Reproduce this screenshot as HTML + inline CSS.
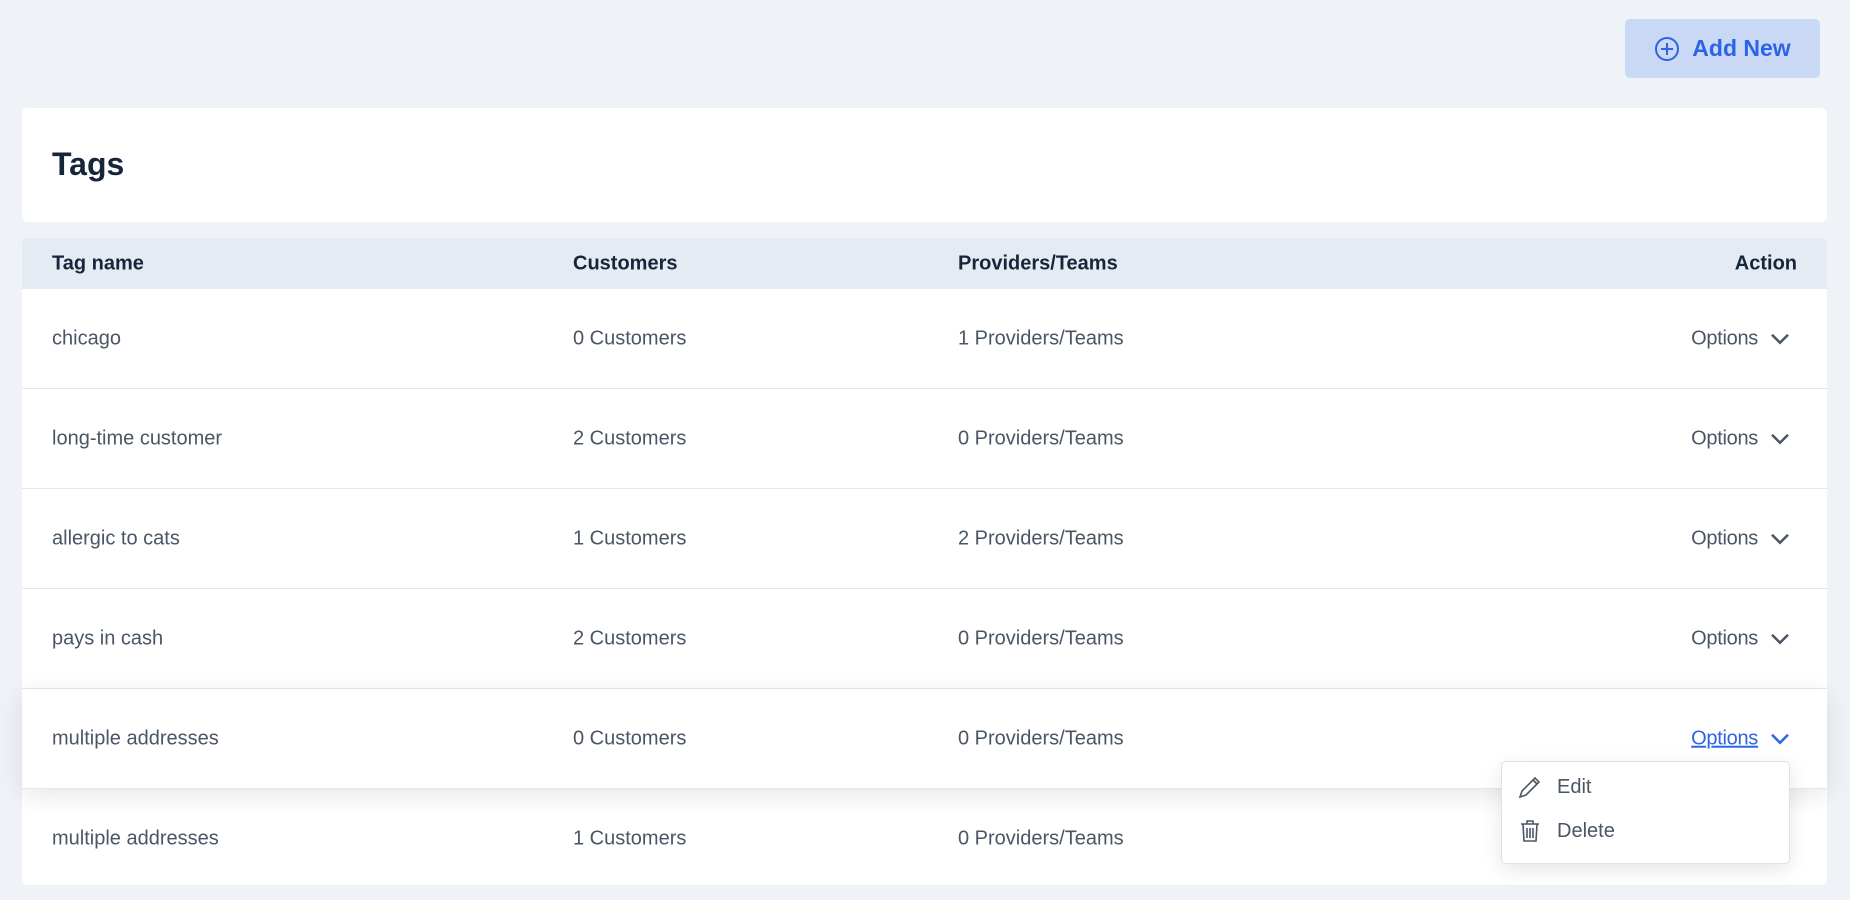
<!DOCTYPE html>
<html><head><style>
body{margin:0;width:1850px;height:900px;background:#eff3f8;font-family:"Liberation Sans",sans-serif;color:#4a5666;position:relative;overflow:hidden}
.btn{position:absolute;left:1625px;top:19px;width:195px;height:59px;background:#c9d9f5;border-radius:5px;color:#2d63e6;font-weight:bold;font-size:23px;display:flex;align-items:center;justify-content:center;gap:12px}
.title{position:absolute;left:22px;top:108px;width:1805px;height:114px;background:#fff;border-radius:6px}
.title h1{margin:0;position:absolute;left:30px;top:38px;font-size:32px;color:#17253a}
.table{position:absolute;left:22px;top:238px;width:1805px;height:647px;background:#fff;border-radius:6px;overflow:visible}
.hd{height:51px;background:#e4ebf3;border-radius:6px 6px 0 0;position:relative;font-weight:bold;color:#17253a;font-size:20px}
.row{height:99px;border-bottom:1px solid #e3e7ec;position:relative;font-size:20px;background:#fff}
.c{position:absolute;top:50%;transform:translateY(-49%)}
.c1{left:30px}.c2{left:551px}.c3{left:936px}.c4{right:37px;display:flex;align-items:center;gap:12px;letter-spacing:-0.3px}
.hl{box-shadow:0 6px 24px rgba(0,0,0,.1);z-index:2}
.dd{position:absolute;left:1501px;top:761px;width:287px;height:101px;background:#fff;border:1px solid #dde2e8;border-radius:5px;box-shadow:0 6px 20px rgba(0,0,0,.1);z-index:5;font-size:20px}
.dd div{position:absolute;left:15px;display:flex;align-items:center;gap:14px}
</style></head><body>
<div class="btn"><svg width="26" height="26" viewBox="0 0 26 26"><circle cx="13" cy="13" r="11" fill="none" stroke="#2d63e6" stroke-width="2"/><path d="M13 7v12M7 13h12" stroke="#2d63e6" stroke-width="2"/></svg>Add New</div>
<div class="title"><h1>Tags</h1></div>
<div class="table">
<div class="hd"><span class="c c1">Tag name</span><span class="c c2">Customers</span><span class="c c3">Providers/Teams</span><span class="c" style="right:30px">Action</span></div>
<div class="row"><span class="c c1">chicago</span><span class="c c2">0 Customers</span><span class="c c3">1 Providers/Teams</span><span class="c c4">Options <svg width="20" height="12"><path d="M2 2l8 8 8-8" fill="none" stroke="#4a5666" stroke-width="2.5"/></svg></span></div>
<div class="row"><span class="c c1">long-time customer</span><span class="c c2">2 Customers</span><span class="c c3">0 Providers/Teams</span><span class="c c4">Options <svg width="20" height="12"><path d="M2 2l8 8 8-8" fill="none" stroke="#4a5666" stroke-width="2.5"/></svg></span></div>
<div class="row"><span class="c c1">allergic to cats</span><span class="c c2">1 Customers</span><span class="c c3">2 Providers/Teams</span><span class="c c4">Options <svg width="20" height="12"><path d="M2 2l8 8 8-8" fill="none" stroke="#4a5666" stroke-width="2.5"/></svg></span></div>
<div class="row"><span class="c c1">pays in cash</span><span class="c c2">2 Customers</span><span class="c c3">0 Providers/Teams</span><span class="c c4">Options <svg width="20" height="12"><path d="M2 2l8 8 8-8" fill="none" stroke="#4a5666" stroke-width="2.5"/></svg></span></div>
<div class="row hl"><span class="c c1">multiple addresses</span><span class="c c2">0 Customers</span><span class="c c3">0 Providers/Teams</span><span class="c c4" style="color:#2d63e6"><u>Options</u> <svg width="20" height="12"><path d="M2 2l8 8 8-8" fill="none" stroke="#2d63e6" stroke-width="2.5"/></svg></span></div>
<div class="row" style="border:none;background:transparent"><span class="c c1">multiple addresses</span><span class="c c2">1 Customers</span><span class="c c3">0 Providers/Teams</span></div>
</div>
<div class="dd">
<div style="top:12px"><svg width="26" height="26" viewBox="0 0 26 26"><path d="M3 23l2-6L18 4l4 4L9 21z M16 6l4 4" fill="none" stroke="#4a5666" stroke-width="1.6"/></svg><span>Edit</span></div>
<div style="top:56px"><svg width="26" height="26" viewBox="0 0 26 26"><path d="M4 6h18M10 6V3h6v3M6 6l1 17h12l1-17M10 10v10M13 10v10M16 10v10" fill="none" stroke="#4a5666" stroke-width="1.6"/></svg><span>Delete</span></div>
</div>
</body></html>
